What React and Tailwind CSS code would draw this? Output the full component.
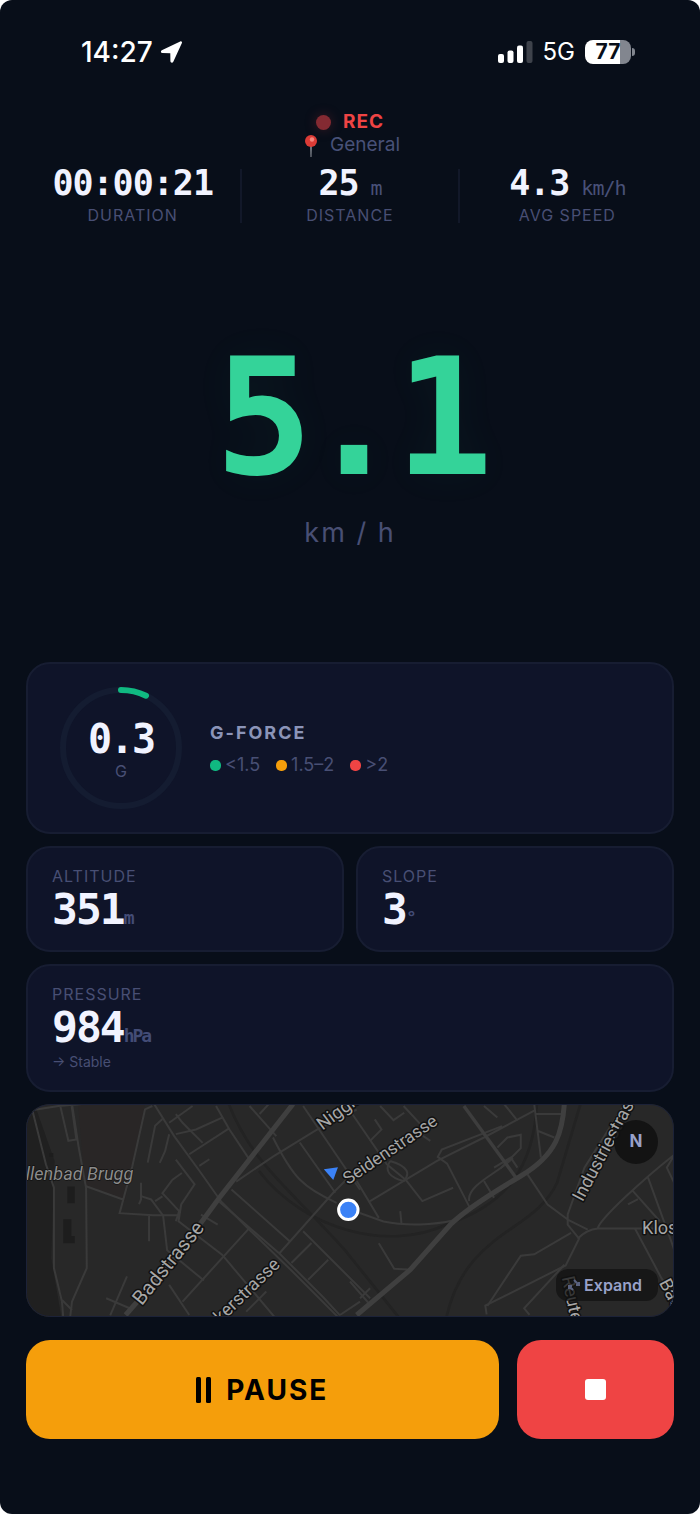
import React from 'react';

const summary = [
    { label: 'Duration', value: '00:00:21' },
    { label: 'Distance', value: '25', unit: 'm' },
    { label: 'Avg speed', value: '4.3', unit: 'km/h' },
];

const StatusBar = () => (
    <div className="flex h-[104px] items-center justify-between pl-[81px] pr-[65px] text-white">
        <div className="flex items-center gap-1.5">
            <span className="text-[28px] font-medium leading-8">14:27</span>
            <svg width="24" height="24" viewBox="0 0 24 24" fill="currentColor" aria-hidden="true">
                <path d="M21.2 1.400c1.200-.5 2.200.5 1.700 1.700l-8.600 18.600c-.7 1.500-2.900 1.100-2.900-.6l-.1-7.900-7.900-.1c-1.700 0-2.100-2.200-.6-2.900z" />
            </svg>
        </div>
        <div className="flex items-center gap-2.5">
            <svg width="35" height="22" viewBox="0 0 35 22" fill="currentColor" aria-hidden="true">
                <rect x="0" y="13" width="6" height="9" rx="2" />
                <rect x="9.500" y="9.500" width="6" height="12.500" rx="2" />
                <rect x="19" y="4.500" width="6" height="17.500" rx="2" />
                <rect x="28.500" y="0" width="6" height="22" rx="2" opacity=".22" />
            </svg>
            <span className="text-[24px] leading-8">5G</span>
            <div className="flex items-center gap-px">
                <div className="flex h-6 w-[46px] items-center justify-center rounded-lg bg-[linear-gradient(90deg,#fff_76%,#82868f_76%)] text-[21px] font-bold leading-6 text-[#080e19]">
                    77
                </div>
                <div className="h-2 w-[3px] rounded-r-full bg-[#82868f]" />
            </div>
        </div>
    </div>
);

const PinIcon = () => (
    <svg width="14" height="22" viewBox="0 0 14 22" aria-hidden="true">
        <path d="M6.300 10h1.400l-.3 12h-.8z" fill="#a9adb5" />
        <circle cx="7" cy="6" r="6" fill="#dc3b36" />
        <circle cx="8" cy="4.500" r="2.200" fill="#f4857c" />
    </svg>
);

const GForceRing = () => (
    <div className="relative size-[122px] shrink-0">
        <svg className="size-full" viewBox="0 0 122 122" fill="none" strokeWidth="6" aria-hidden="true">
            <circle cx="61" cy="61" r="58" stroke="#141c31" />
            <path d="M61 3a58 58 0 0 1 25 5.700" stroke="#10b981" strokeLinecap="round" />
        </svg>
        <div className="absolute inset-0 flex flex-col items-center justify-center pt-1.5">
            <span className="font-['DejaVu_Sans_Mono',monospace] text-[40px] font-bold leading-10 tracking-[-2px] text-[#f1f3ff]">0.3</span>
            <span className="text-[16px] leading-6 text-[#484f74]">G</span>
        </div>
    </div>
);

const Legend = ({ color, children }) => (
    <li className="flex items-center gap-1">
        <span className={`size-[11px] rounded-[5px] ${color}`} />
        {children}
    </li>
);

const Metric = ({ label, value, unit, note }) => (
    <section className="rounded-3xl border-2 border-[#171d32] bg-[#0f1429] px-6 py-[19px]">
        <h2 className="text-[16px] uppercase leading-[18px] tracking-[1px] text-[#484f74]">{label}</h2>
        <p className="mt-0.5 font-['DejaVu_Sans_Mono',monospace] text-[43px] font-bold leading-11 tracking-[-2px] text-[#f1f3ff]">
            {value}
            <span className="text-[18px] leading-4 text-[#434c76]">{unit}</span>
        </p>
        {note && <p className="mt-1 text-[14px] leading-[18px] text-[#484f74]">{note}</p>}
    </section>
);

const StreetMap = () => (
    <svg className="h-[213px] w-full" viewBox="0 0 1944 636" preserveAspectRatio="xMidYMid slice" role="img" aria-label="Map of the current position">
        <rect width="1944" height="636" fill="#282828" />
        <path d="M0 0h30l60 170-10 290 30 176H0z" fill="#202020" />
        <path d="M160 0h200l-60 290-120-50z" fill="#292626" />
        <path d="M128 246h22v50h-22zM116 344h24v50h10v22h-34zM74 146h12v12H74z" fill="#1d1d1d" />

        {/* railway */}
        <g fill="none" stroke="#232323" strokeWidth="8">
            <path d="M610 0c70 180 190 260 350 440l160 200M700 200c140 180 390 240 560 160 180-60 260-170 270-360M1260 636c60-260 260-250 330-400l70-236" />
        </g>

        {/* west side */}
        <g transform="translate(-18 -30)" fill="none" stroke="#3a3a3a" strokeWidth="6">
            <path d="M30 50l90-14 70-6M42 50l40 160 24 70v240l24 100 4 50M160 30l20 130 22 120 2 240-44 100-6 50M125 36l24 104 24-4-14-100" />
            <path d="M200 275l112 40M400 36l-22 10-38 170-38 140 100 6h76M430 75l-22 20-22 110M450 120l-12 50-16 36" />
            <path d="M405 30l60 96 80 110 60 85 80 80 134 130 140 140M470 120l60-14 80-36M510 180l120-78M590 36l40 70 60 90M470 60l20 26 60 60M540 215l30-20M450 86l70-50" />
            <path d="M470 196l56 74-40 60-8 50 130 100 160 190M366 265v50l-6 14M366 305l30 10 36 48 12 104 110 90M470 380l10-30-50-54 30-40 28-20M408 320l22-14M390 364v76" />
            <path d="M600 322l180 155 130 130 50 54M636 285l174 155M850 410l200 200M690 400l-200 220M780 475l160-180 80-80M650 262l110-75 130-80 120-60M760 130c60 120 90 150 190 195M840 145l106 150M690 36l80 90M850 36l170 250M720 60l26-28" />
            <path d="M815 505l60-60M865 555l60-60M450 570l60 90M324 545l-50 116M262 610l70 30M130 615l30 30M960 660l60-40M545 360l50 30M740 590l-60 60" />
            <path d="M820 30L600 310 460 500 320 660" stroke="#3f3f3f" strokeWidth="15" />
        </g>

        {/* east side */}
        <g transform="translate(972 -30)" fill="none" stroke="#3a3a3a" strokeWidth="6">
            <path d="M0 345l100 36c70 14 150 10 210-4M20 260l66 110M0 50l110 160 56 46 50 64 92-40M60 320l200-120 140-70 150-80M90 36l40 42 32-22M160 36l50 54M360 344l-70-136-28-20 12-22 180-70M356 320c-10-50 100-90 130-130" />
            <path d="M120 200c-20 30 0 50 40 60 20-20 16-44-40-60M60 140l34-34-20-30M240 140l-30-20M440 160l30-30 40-8v40l-60 60M430 220l50-30 20 30M400 260l30 50M550 30l20 160M556 60h76M560 110l50 20M460 30l40 50M400 36l40 34" />
            <path d="M340 36l160 220" stroke="#3d3d3d" strokeWidth="10" />
            <path d="M0 560l60 70M30 610l30-30M86 446l46 76 40 2M150 350l4 40M820 30L700 220l-50 140 0 30 34 42-40 80-240 120 4 26M650 375l60 30M530 240l60 90 60 45" />
            <path d="M680 432c20-20 40-28 60-30h230M740 400c10-30 140-150 230-220M890 250l80 220M845 290l80 90M850 400l80 150 40 60M970 180l-24 40 24 50M660 415l-110 64-40 4-100 150M640 510l-120 130 16 20M830 330l30-16" />
            <path d="M640 30c-6 80-20 150-130 215S340 350 300 390L180 525 20 660" stroke="#3f3f3f" strokeWidth="15" />
        </g>

        <g
            fill="#a6a6a6"
            stroke="#111111"
            strokeWidth="9"
            paintOrder="stroke"
            strokeLinejoin="round"
            fontSize="54"
            fontFamily="Roboto, sans-serif"
        >
            <text x="4" y="226" fill="#8b8b8b" fontSize="54" fontStyle="italic" strokeWidth="4">llenbad Brugg</text>
            <text transform="translate(350 604) rotate(-51)" fontSize="60">Badstrasse</text>
            <text transform="translate(586 656) rotate(-44)">kerstrasse</text>
            <text transform="translate(890 80) rotate(-37)">Niggli</text>
            <text transform="translate(966 242) rotate(-34)" fontSize="52">Seidenstrasse</text>
            <text transform="translate(1666 294) rotate(-62)">Industriestras</text>
            <text x="1844" y="388">Klos</text>
            <text transform="translate(1604 518) rotate(78)">Reute</text>
            <text transform="translate(1894 534) rotate(62)">Bad</text>
        </g>

        <path d="M894 195l42-6-14 38z" fill="#3b82f6" />
        <circle cx="967" cy="316" r="29" fill="#3b82f6" stroke="#ffffff" strokeWidth="9" />
    </svg>
);

const App = () => {
    return (
        <div className="bg-white font-[Inter,sans-serif]">
            <div className="flex min-h-screen flex-col rounded-xl bg-[#080e19]">
                <StatusBar />

                <header className="px-[25px]">
                    <div className="flex flex-col items-center pt-[7px]">
                        <p className="flex h-[23px] items-center gap-3 text-[19px] font-bold tracking-[1px] text-[#ef4444]">
                            <span className="size-[15px] rounded-full bg-[#842a32] shadow-[0_0_12px_#842a3266]" />
                            REC
                        </p>
                        <p className="flex h-[23px] items-center gap-3 pl-1 text-[19px] text-[#485178]">
                            <PinIcon />
                            General
                        </p>
                    </div>
                    <dl className="mt-3 flex divide-x-2 divide-[#121829]">
                        {summary.map((item) => (
                            <div key={item.label} className="flex h-[54px] flex-1 flex-col-reverse items-center justify-between">
                                <dt className="text-[16px] uppercase leading-4 tracking-[1px] text-[#484f74]">{item.label}</dt>
                                <dd className="font-['DejaVu_Sans_Mono',monospace] text-[35px] font-bold leading-7 tracking-[-1px] text-[#f1f3ff]">
                                    {item.value}
                                    {item.unit && <span className="ml-3 text-[20px] font-normal leading-4 text-[#485178]">{item.unit}</span>}
                                </dd>
                            </div>
                        ))}
                    </dl>
                </header>

                <main className="flex flex-1 flex-col px-[26px] pb-[75px]">
                    <div className="flex flex-1 flex-col items-center justify-center py-20">
                        <p className="font-['DejaVu_Sans_Mono',monospace] text-[163px] font-bold leading-[163px] tracking-[-8px] text-[#34d399] [text-shadow:0_0_40px_#34d3990d]">
                            5.1
                        </p>
                        <p className="mt-[18px] text-[27px] leading-8 tracking-[2px] text-[#484f74]">km / h</p>
                    </div>

                    <div className="grid grid-cols-2 gap-3">
                        <section className="col-span-2 flex items-center gap-7 rounded-3xl border-2 border-[#171d32] bg-[#0f1429] px-8 py-[23px]">
                            <GForceRing />
                            <div className="pt-0.5">
                                <h2 className="text-[18px] font-bold leading-6 tracking-[2px] text-[#8b94b8]">G-FORCE</h2>
                                <ul className="mt-2 flex gap-4 text-[18px] leading-6 text-[#484f74]">
                                    <Legend color="bg-[#10b981]">&lt;1.5</Legend>
                                    <Legend color="bg-[#f59e0b]">1.5–2</Legend>
                                    <Legend color="bg-[#ef4444]">&gt;2</Legend>
                                </ul>
                            </div>
                        </section>
                        <Metric label="Altitude" value="351" unit="m" />
                        <Metric label="Slope" value="3" unit="°" />
                        <div className="col-span-2">
                            <Metric label="Pressure" value="984" unit="hPa" note="→ Stable" />
                        </div>
                        <div className="relative col-span-2 overflow-hidden rounded-3xl">
                            <StreetMap />
                            <div className="pointer-events-none absolute inset-0 rounded-3xl border border-[#1c2238]" />
                            <button type="button" className="absolute right-4 top-4 size-11 rounded-full bg-[#111111]/90 text-[17px] font-bold text-[#98a1c9]">
                                N
                            </button>
                            <button
                                type="button"
                                className="absolute bottom-4 right-4 flex h-8 items-center gap-1 rounded-xl bg-[#111111]/75 pl-3 pr-4 text-[16px] font-semibold text-[#98a1c9]"
                            >
                                <svg width="12" height="12" viewBox="0 0 12 12" fill="none" stroke="#59617f" strokeWidth="2" aria-hidden="true">
                                    <path d="M6 1l4 4M11 3v3H8M5 11L1 7M1 10V7h3" />
                                </svg>
                                Expand
                            </button>
                        </div>
                    </div>

                    <div className="mt-[23px] grid grid-cols-[3fr_1fr] gap-[18px]">
                        <button
                            type="button"
                            className="flex h-[99px] items-center justify-center gap-3.5 rounded-3xl bg-[#f59e0b] text-[28px] font-bold tracking-[2px] text-black"
                        >
                            <svg width="16" height="26" viewBox="0 0 16 26" aria-hidden="true">
                                <rect x="0" y="0" width="5" height="26" rx="1.500" />
                                <rect x="10" y="0" width="5" height="26" rx="1.500" />
                            </svg>
                            PAUSE
                        </button>
                        <button type="button" aria-label="Stop" className="flex h-[99px] items-center justify-center rounded-3xl bg-[#ef4444]">
                            <span className="size-[21px] rounded-[3px] bg-white" />
                        </button>
                    </div>
                </main>
            </div>
        </div>
    );
};

export default App;
